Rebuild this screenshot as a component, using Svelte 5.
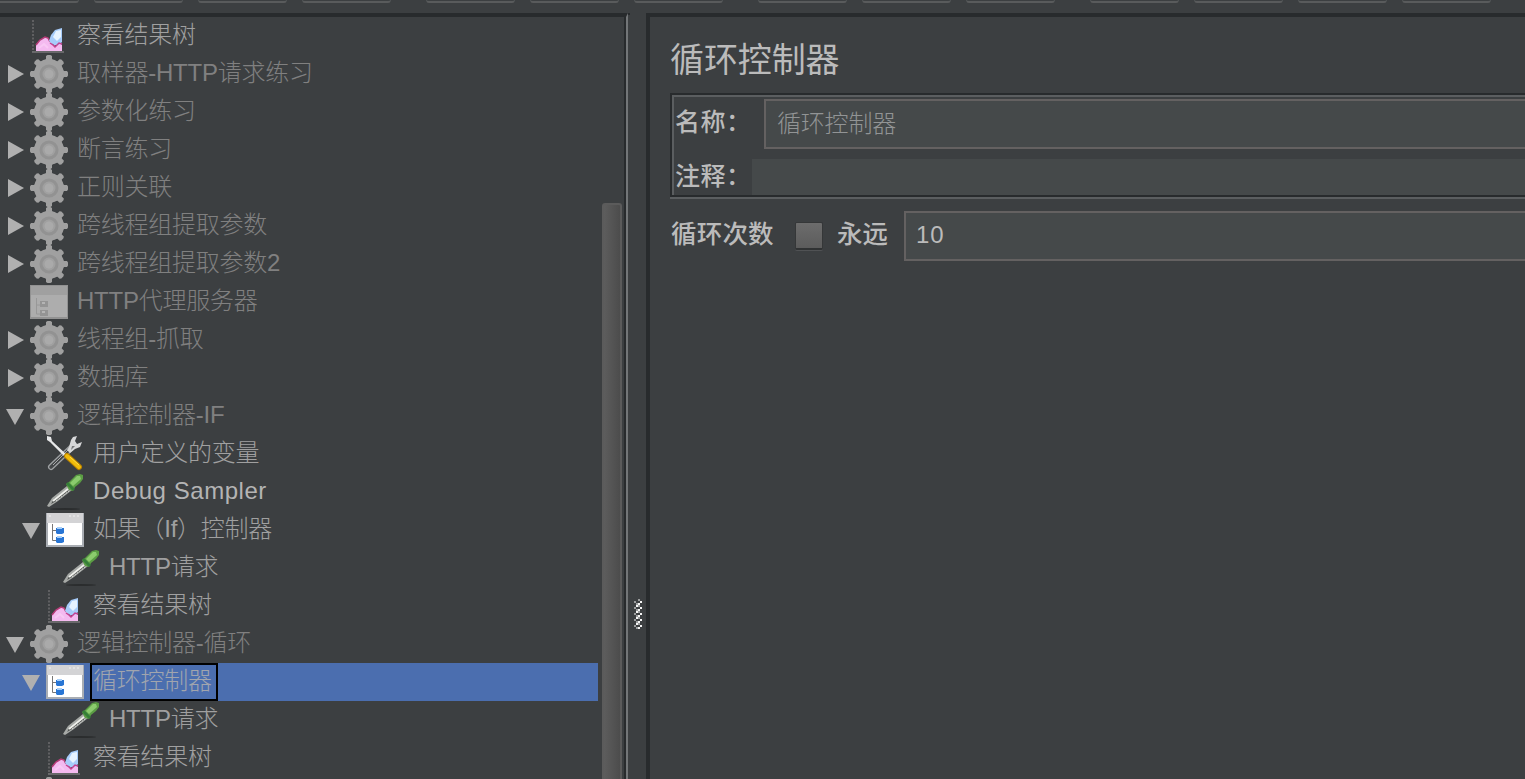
<script>
  const toolbar = [4, 3, 3, 4];

  const rows = [
    { label: '察看结果树', icon: 'chart', level: 0 },
    { label: '取样器-HTTP请求练习', icon: 'gear', level: 0, arrow: 'closed', disabled: true },
    { label: '参数化练习', icon: 'gear', level: 0, arrow: 'closed', disabled: true },
    { label: '断言练习', icon: 'gear', level: 0, arrow: 'closed', disabled: true },
    { label: '正则关联', icon: 'gear', level: 0, arrow: 'closed', disabled: true },
    { label: '跨线程组提取参数', icon: 'gear', level: 0, arrow: 'closed', disabled: true },
    { label: '跨线程组提取参数2', icon: 'gear', level: 0, arrow: 'closed', disabled: true },
    { label: 'HTTP代理服务器', icon: 'window', level: 0, disabled: true },
    { label: '线程组-抓取', icon: 'gear', level: 0, arrow: 'closed', disabled: true },
    { label: '数据库', icon: 'gear', level: 0, arrow: 'closed', disabled: true },
    { label: '逻辑控制器-IF', icon: 'gear', level: 0, arrow: 'open', disabled: true },
    { label: '用户定义的变量', icon: 'tools', level: 1 },
    { label: 'Debug Sampler', icon: 'dropper', level: 1, latin: true },
    { label: '如果（If）控制器', icon: 'window', level: 1, arrow: 'open' },
    { label: 'HTTP请求', icon: 'dropper', level: 2 },
    { label: '察看结果树', icon: 'chart', level: 1 },
    { label: '逻辑控制器-循环', icon: 'gear', level: 0, arrow: 'open', disabled: true },
    { label: '循环控制器', icon: 'window', level: 1, arrow: 'open', id: 'loop' },
    { label: 'HTTP请求', icon: 'dropper', level: 2 },
    { label: '察看结果树', icon: 'chart', level: 1 },
    { label: '', icon: 'gear', level: 0, disabled: true }
  ];

  const teeth = [0, 45, 90, 135, 180, 225, 270, 315];

  let selected = $state('loop');
  let name = $state('循环控制器');
  let comment = $state('');
  let forever = $state(false);
  let loops = $state('10');
</script>

<div class="app">
  <div class="toolbar">
    {#each toolbar as count}
      <div class="tool-group">
        {#each Array(count) as _}
          <span class="tool"></span>
        {/each}
      </div>
    {/each}
  </div>

  <div class="main">
    <div class="tree-pane">
      <div class="tree">
        {#each rows as row}
          <div
            class="row level-{row.level}"
            class:disabled={row.disabled}
            class:latin={row.latin}
            class:selected={row.id === selected}
          >
            <svg class="arrow" width="30" height="38" viewBox="0 0 30 38">
              {#if row.arrow === 'closed'}
                <path d="M8 10L24 19L8 28Z" fill="#b0b0b0" />
              {:else if row.arrow === 'open'}
                <path d="M6 12H24L15 28Z" fill="#b0b0b0" />
              {/if}
            </svg>

            <svg class="icon" width="38" height="38" viewBox="0 0 38 38">
              {#if row.icon === 'gear'}
                <g fill="#a0a0a0">
                  {#each teeth as angle}
                    <path d="M14 7L16 4V1L17.5 0H20.5L22 1V4L24 7Z" transform="rotate({angle} 19 19)" />
                  {/each}
                  <circle cx="19" cy="19" r="15" />
                </g>
                <circle cx="19" cy="19" r="8" fill="#a0a0a0" stroke="#929292" stroke-width="3" />
                <circle cx="19" cy="19" r="4.5" fill="#aaaaaa" />
              {:else if row.icon === 'window'}
                {#if row.disabled}
                  <rect y="2" width="38" height="34" fill="#929292" />
                  <rect x="1" y="3" width="36" height="31" fill="#adadad" />
                  <rect x="1" y="3" width="36" height="9" fill="#a0a0a0" />
                  <path d="M6.5 15V31H12M7 22H12" fill="none" stroke="#989898" />
                  <path d="M10 18H18V24H10ZM10 27H18V33H10Z" fill="#949494" />
                  <path d="M12 20H15M12 29H15" stroke="#b4b4b4" stroke-width="2" />
                {:else}
                  <rect y="2" width="38" height="34" fill="#a9adb3" />
                  <rect x="2" y="3" width="34" height="31" fill="#fff" />
                  <rect x="1" y="2" width="36" height="10" fill="#d3d3d5" />
                  <path d="M3 5H5M23 5H25M27 5H29M31 5H33" stroke="#e6e6e6" stroke-width="1.5" />
                  <path d="M6.5 13V29.5H10M7 19.5H10" fill="none" stroke="#777" />
                  <path d="M10 17H18V22L16 23H11L10 22ZM10 26H18V31L16 32H11L10 31Z" fill="#2875d4" />
                  <path d="M11 17H16M11 26H16" stroke="#a9d0f8" stroke-width="2" />
                {/if}
              {:else if row.icon === 'chart'}
                <path d="M3 3V35" stroke="#6c6c6e" stroke-width="1.5" stroke-dasharray="2 1.5" />
                <path d="M2 35H34" stroke="#777779" stroke-width="1.5" />
                <path d="M6 34V28L10 23L15 20L18 21L23 28L26 29L30 26L32 28V34Z" fill="#f4baf0" />
                <path d="M6 28L10 23L15 20L18 21L20 25" fill="none" stroke="#b63c78" stroke-width="1.5" />
                <path d="M19 24L21 18L25 13L32 11V25L29 28H24L21 26Z" fill="#a7ccfa" />
                <path d="M23 20L26 14L31 13V20L27 24Z" fill="#e7f3ff" />
                <path d="M20 26L23 28L25 30L29 26L32 27" fill="none" stroke="#c54190" stroke-width="1.5" />
                <path d="M9 31L14 27L18 31" fill="none" stroke="#f8c9f4" stroke-width="2" />
              {:else if row.icon === 'tools'}
                <path d="M5 32L25 13" stroke="#a0a3a5" stroke-width="6" stroke-linecap="round" />
                <path d="M5 32L25 13" stroke="#444749" stroke-width="3.5" stroke-linecap="round" />
                <path d="M7 30L23 14" stroke="#a9aaab" stroke-width="1" />
                <path d="M23 12L25 5L27 2L31 1L29 6L31 9L36 7L34 12L29 14L24 18L21 15Z" fill="#d7d8d9" />
                <path d="M26 11L29 11L25 15Z" fill="#77797b" />
                <path d="M1 1L5 2L6 6L21 20L19 22L4 7L1 5Z" fill="#e7e8e9" />
                <path d="M21 21L33 32" stroke="#b78000" stroke-width="6" stroke-linecap="round" />
                <path d="M21 21L33 32" stroke="#f2bc0b" stroke-width="4" stroke-linecap="round" />
                <path d="M24 22L33 30" stroke="#ffdc46" stroke-width="1" />
              {:else}
                <ellipse cx="19" cy="36" rx="15" ry="1" fill="#2b2d2e" />
                <path d="M1 33L6 25L21 13L26 17L12 28L3 34Z" fill="#a7aaa7" />
                <path d="M5 31L8 26L21 16L23 18L10 28Z" fill="#4d504e" />
                <path d="M7 28L22 16" stroke="#f0f1ed" stroke-width="2" />
                <path d="M10 28L23 18" stroke="#d5d6d3" stroke-dasharray="2 1" />
                <path d="M20 11L23 9L30 2L34 1L37 2L37 6L34 10L29 14L27 18L23 17Z" fill="#5b9d44" />
                <path d="M24 10L31 3L34 3L35 6L27 13Z" fill="#8bcb6d" />
                <path d="M20 11L22 9L29 16L27 18Z" fill="#357f38" />
              {/if}
            </svg>

            {#if row.label}
              <span class="label">{row.label}</span>
            {/if}
          </div>
        {/each}
      </div>
      <div class="scrollbar">
        <div class="thumb"></div>
      </div>
    </div>

    <div class="divider">
      <svg width="8" height="30" viewBox="0 0 8 30">
        {#each [0, 6, 12, 18, 24] as y}
          <path d="M4 {y}h2v2h-2zM0 {y + 2}h2v2h-2zM2 {y + 4}h2v2h-2z" fill="#9b9d9e" />
          <path d="M6 {y + 2}h2v2h-2zM4 {y + 4}h2v2h-2zM2 {y + 6}h2v2h-2z" fill="#f5f5f5" />
        {/each}
      </svg>
    </div>

    <div class="editor">
      <h1>循环控制器</h1>
      <div class="group">
        <div class="field">
          <label for="name">名称：</label>
          <input id="name" class="name" bind:value={name} />
        </div>
        <div class="field">
          <label for="comment">注释：</label>
          <input id="comment" class="comment" bind:value={comment} />
        </div>
      </div>
      <div class="loop">
        <span class="loop-title">循环次数</span>
        <input type="checkbox" id="forever" bind:checked={forever} />
        <label for="forever">永远</label>
        <input class="count" aria-label="循环次数" bind:value={loops} />
      </div>
    </div>
  </div>
</div>

<style>
  :global(body) {
    background: #3c3f41;
    overflow: hidden;
  }

  .app {
    display: flex;
    flex-direction: column;
    height: 779px;
    overflow: hidden;
    background: #3c3f41;
    color: #bbbbbb;
    font-family: 'Liberation Sans', 'Noto Sans CJK SC', sans-serif;
    font-size: 24px;
    font-weight: 300;
  }

  .toolbar {
    display: flex;
    flex: none;
    gap: 35px;
    height: 13px;
    margin-left: -10px;
  }

  .tool-group {
    display: flex;
    gap: 15px;
  }

  .tool {
    box-sizing: border-box;
    width: 89px;
    height: 3px;
    border: 1px solid #505354;
    border-top: 0;
    border-bottom: 2px solid #595b5c;
    border-radius: 0 0 4px 4px;
  }

  .main {
    display: flex;
    flex: 1;
    min-height: 0;
  }

  .tree-pane {
    display: flex;
    box-sizing: border-box;
    width: 628px;
    border-top: 4px solid #282b2d;
    border-right: 2px solid #737678;
    box-shadow: inset -2px 0 #282b2d;
    overflow: hidden;
  }

  .tree {
    width: 598px;
    flex: none;
  }

  .row {
    display: flex;
    height: 38px;
    color: #a0a0a0;
    letter-spacing: -0.25px;
    white-space: nowrap;
  }

  .level-1 {
    padding-left: 16px;
  }

  .level-2 {
    padding-left: 32px;
  }

  .disabled {
    color: #808080;
  }

  .latin {
    color: #b4b4b4;
    letter-spacing: 0.55px;
  }

  .selected {
    background: #4b6eaf;
    color: #a1a5ae;
  }

  .arrow,
  .icon {
    display: block;
    flex: none;
  }

  .label {
    box-sizing: border-box;
    height: 38px;
    margin-left: 6px;
    padding: 0 4px 0 1px;
    border: 2px solid transparent;
    line-height: 31px;
  }

  .selected .label {
    border-color: #000;
  }

  .scrollbar {
    width: 26px;
    padding: 186px 0 0 4px;
    box-sizing: border-box;
  }

  .thumb {
    box-sizing: border-box;
    width: 20px;
    height: 100%;
    border: 2px solid #5b5b5b;
    border-bottom: 0;
    border-radius: 3px 3px 0 0;
    background: linear-gradient(90deg, #5d5d5d, #4c4c4c);
  }

  .divider {
    width: 18px;
    flex: none;
    padding: 586px 0 0 6px;
    box-sizing: border-box;
    background: linear-gradient(#282b2d, #282b2d) no-repeat 0 0 / 2px 2px;
  }

  .divider svg {
    display: block;
  }

  .editor {
    flex: 1;
    min-width: 0;
    box-sizing: border-box;
    border: solid #282b2d;
    border-width: 4px 0 0 4px;
    padding-left: 20px;
  }

  h1 {
    box-sizing: border-box;
    margin: 0;
    padding-top: 21px;
    height: 76px;
    font-size: 34px;
    font-weight: 400;
    line-height: 44px;
    letter-spacing: -0.1px;
  }

  .group {
    display: flex;
    flex-direction: column;
    gap: 10px;
    box-sizing: border-box;
    height: 104px;
    border: solid #282b2d;
    border-width: 2px 0 2px 2px;
    box-shadow: inset 2px 2px #5b5e60, 0 2px #5b5e60;
    padding: 4px 0 0 2px;
  }

  .field {
    display: flex;
  }

  .field label {
    box-sizing: border-box;
    width: 78px;
    flex: none;
    padding-left: 1px;
    line-height: 47px;
    font-size: 25px;
    font-weight: 500;
    letter-spacing: 0.5px;
  }

  .field + .field label {
    height: 36px;
    line-height: 35px;
  }

  input {
    box-sizing: border-box;
    flex: 1;
    min-width: 0;
    margin: 0;
    border: 2px solid #646161;
    border-right: 0;
    border-radius: 0;
    background: #45494a;
    color: #bbbbbb;
    font: inherit;
    outline: none;
  }

  .name {
    height: 50px;
    margin-left: 12px;
    padding: 0 0 5px 11px;
    color: #929495;
    letter-spacing: -0.2px;
  }

  .comment {
    height: 36px;
    border: 0;
  }

  .loop {
    display: flex;
    height: 50px;
    margin-top: 14px;
    line-height: 47px;
    font-size: 25.5px;
    font-weight: 500;
  }

  .loop-title {
    width: 124px;
    padding-left: 1px;
    letter-spacing: 0.2px;
  }

  input[type='checkbox'] {
    appearance: none;
    flex: none;
    width: 28px;
    height: 28px;
    margin-top: 11px;
    border: 1px solid #353738;
    border-bottom: 2px solid #303233;
    border-radius: 2px;
    background: linear-gradient(#6c6c6c, #5c5c5c);
    box-shadow: 0 1px #505254;
  }

  .loop label {
    width: 67px;
    margin-left: 14px;
  }

  .count {
    padding: 0 0 3px 10px;
    font-size: 24px;
    font-weight: 400;
    letter-spacing: 0.8px;
  }
</style>
